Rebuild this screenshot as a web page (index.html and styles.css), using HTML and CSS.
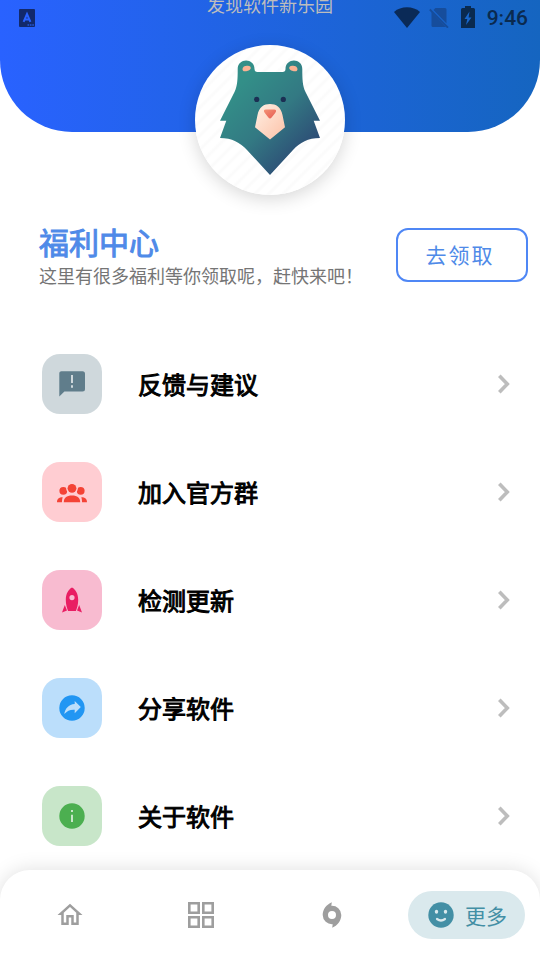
FILE: index.html
```html
<!DOCTYPE html>
<html lang="zh-CN">
<head>
<meta charset="utf-8">
<meta name="viewport" content="width=device-width, initial-scale=1">
<title>更多</title>
<link rel="stylesheet" href="styles.css">
</head>
<body>
<div class="status-bar">
  <svg class="status-app" width="16" height="18" viewBox="0 0 16 18" aria-hidden="true">
    <rect width="16" height="18" rx="1" fill="#12296b"/>
    <path d="M4.600 12.800 8 5l3.400 7.800M6 10.400h4" fill="none" stroke="#2962ff" stroke-width="2"/>
    <path d="M8.500 16h6.500" stroke="#2458d8" stroke-width="1.400" stroke-dasharray="1.600 .8"/>
  </svg>
  <div class="status-right">
    <svg width="26" height="22" viewBox="0 0 26 22" aria-hidden="true"><path d="M0 6C7-.2 19-.2 26 6L13 22Z" fill="#0a2a57"/></svg>
    <svg width="20" height="22" viewBox="0 0 20 22" aria-hidden="true">
      <path d="M6.500 2H16a1.500 1.500 0 0 1 1.500 1.500V17.500L4.500 4ZM2.500 6 17 21H4A1.500 1.500 0 0 1 2.500 19.500Z" fill="#164d9c"/>
      <path d="M.8 3.500 19 21.700" stroke="#164d9c" stroke-width="1.800"/>
    </svg>
    <svg width="14" height="22" viewBox="0 0 14 22" aria-hidden="true">
      <path d="M4 0h6v2h2.500A1.500 1.500 0 0 1 14 3.500V22H0V3.500A1.500 1.500 0 0 1 1.500 2H4Z" fill="#0a2a4f"/>
      <path d="M8.500 5.500 3.500 13h2.800L5 19l5.500-7.500H7.600Z" fill="#1866ca"/>
    </svg>
    <span class="clock">9:46</span>
  </div>
</div>

<header class="hero"><p class="tagline">发现软件新乐园</p></header>

<main class="content">
  <div class="avatar">
    <svg viewBox="0 0 150 150" role="img" aria-label="小熊">
      <defs>
        <linearGradient id="fur" gradientUnits="userSpaceOnUse" x1="42" y1="42" x2="110" y2="110">
          <stop offset="0" stop-color="#338f88"/><stop offset=".5" stop-color="#337983"/><stop offset="1" stop-color="#2d4b75"/>
        </linearGradient>
        <linearGradient id="snout" x1="0" y1="0" x2="1" y2="1">
          <stop offset="0" stop-color="#fff0e4"/><stop offset="1" stop-color="#fcc1a7"/>
        </linearGradient>
        <linearGradient id="nose" x1="0" y1="0" x2="1" y2="1">
          <stop offset="0" stop-color="#f49376"/><stop offset="1" stop-color="#e65a51"/>
        </linearGradient>
      </defs>
      <path fill="url(#fur)" d="M42.700 24C42.700 12.500 59.500 12.500 59.500 24Q59.500 27 62.500 27H87.500Q90.500 27 90.500 24C90.500 12.500 107.300 12.500 107.300 24C107.300 34 107.500 41 110.500 47L125 75.700H118.700L125 93C113 93 105 97.500 98 105L75 130 52 105C45 97.500 37 93 25 93L31.300 75.700H25L39.500 47C42.500 41 42.700 34 42.700 24Z"/>
      <path fill="#fbb293" d="M47.500 24c0-3 4-4 6.500-3 3 1 2 4-1 4.700-3 .8-5.500 1.300-5.500-1.700ZM102.500 24c0-3-4-4-6.500-3-3 1-2 4 1 4.700 3 .8 5.500 1.300 5.500-1.700Z"/>
      <circle cx="61.700" cy="54.400" r="2.600" fill="#1b2f53"/><circle cx="88.300" cy="54.400" r="2.600" fill="#1b2f53"/>
      <path fill="url(#snout)" d="M60 82.300 62.500 70C64 62 69 59 75 59S86 62 87.500 70L90 82.300 75 94.400Z"/>
      <path fill="url(#nose)" d="M71 64.500h8q3.500 0 1.200 3.500L76.600 72.500q-1.600 2-3.200 0L69.800 68Q67.500 64.500 71 64.500Z"/>
    </svg>
  </div>

  <section class="welfare">
    <div>
      <h1>福利中心</h1>
      <p>这里有很多福利等你领取呢，赶快来吧！</p>
    </div>
    <button class="claim" type="button">去领取</button>
  </section>

  <ul class="menu">
    <li><a href="#feedback">
      <span class="tile tile-grey"><svg class="icon" viewBox="0 0 30 30" aria-hidden="true"><path fill-rule="evenodd" d="M4.500 2.200h21A2.500 2.500 0 0 1 28 4.700v15.200a2.500 2.500 0 0 1-2.500 2.500H7.400L2.300 27.600V4.700A2.300 2.300 0 0 1 4.500 2.200ZM14 6v8h2V6ZM14 16.200v2.600h2v-2.600Z"/></svg></span>
      <span class="label">反馈与建议</span>
      <svg class="chevron" viewBox="0 0 12 20" aria-hidden="true"><path d="m1.300 1.800 8 8.200-8 8.200"/></svg>
    </a></li>
    <li><a href="#group">
      <span class="tile tile-red"><svg class="icon" viewBox="0 0 30 30" aria-hidden="true"><clipPath id="left-head"><path d="M0 8H9.300Q8.600 13.500 11 15.500V19H0Z"/></clipPath><clipPath id="right-head"><path d="M30 8H20.700Q21.400 13.500 19 15.500V19H30Z"/></clipPath><circle cx="15" cy="11.300" r="4.400"/><circle cx="6.300" cy="13.800" r="3.900" clip-path="url(#left-head)"/><circle cx="23.700" cy="13.800" r="3.900" clip-path="url(#right-head)"/><path d="M6.800 25.300C6.800 20.800 9.500 18.500 15 18.500S23.200 20.800 23.200 25.300ZM0 25.300C0 22 1.800 20.400 5.700 20.300Q4.900 22.200 4.900 25.300ZM30 25.300C30 22 28.200 20.400 24.300 20.300Q25.100 22.200 25.100 25.300Z"/></svg></span>
      <span class="label">加入官方群</span>
      <svg class="chevron" viewBox="0 0 12 20" aria-hidden="true"><path d="m1.300 1.800 8 8.200-8 8.200"/></svg>
    </a></li>
    <li><a href="#update">
      <span class="tile tile-pink"><svg class="icon" viewBox="0 0 30 30" aria-hidden="true"><path fill-rule="evenodd" d="M15 2.600C18.700 4.500 21.200 9 21.200 15 21.200 19.500 20 23.500 18.900 26H11.100C10 23.500 8.800 19.500 8.800 15 8.800 9 11.300 4.500 15 2.600ZM15 10a2.600 2.600 0 1 0 0 5.200 2.600 2.600 0 0 0 0-5.200ZM7.800 20 10 25.500 5 27.400ZM22.200 20 20 25.500 25 27.400Z"/></svg></span>
      <span class="label">检测更新</span>
      <svg class="chevron" viewBox="0 0 12 20" aria-hidden="true"><path d="m1.300 1.800 8 8.200-8 8.200"/></svg>
    </a></li>
    <li><a href="#share">
      <span class="tile tile-blue"><svg class="icon" viewBox="0 0 30 30" aria-hidden="true"><path fill-rule="evenodd" d="M15 2.300a12.700 12.700 0 1 0 0 25.400 12.700 12.700 0 0 0 0-25.400ZM17.700 8 23.800 14.100 17.700 20.300V16.700C13 16.400 10.300 17.800 7.300 21 8.200 15.500 11.500 11.500 17.700 11Z"/></svg></span>
      <span class="label">分享软件</span>
      <svg class="chevron" viewBox="0 0 12 20" aria-hidden="true"><path d="m1.300 1.800 8 8.200-8 8.200"/></svg>
    </a></li>
    <li><a href="#about">
      <span class="tile tile-green"><svg class="icon" viewBox="0 0 30 30" aria-hidden="true"><path fill-rule="evenodd" d="M15 2.300a12.700 12.700 0 1 0 0 25.400 12.700 12.700 0 0 0 0-25.400ZM14 9v2h2V9ZM14 13.700V21h2v-7.300Z"/></svg></span>
      <span class="label">关于软件</span>
      <svg class="chevron" viewBox="0 0 12 20" aria-hidden="true"><path d="m1.300 1.800 8 8.200-8 8.200"/></svg>
    </a></li>
  </ul>
</main>

<nav class="tabs">
  <a href="#home" aria-label="首页"><svg class="icon" viewBox="0 0 24 24" aria-hidden="true"><path d="M12 5.690l5 4.500V18h-2v-6H9v6H7v-7.810l5-4.500M12 3 2 12h3v8h6v-6h2v6h6v-8h3Z"/></svg></a>
  <a href="#categories" aria-label="分类"><svg class="icon icon-grid" viewBox="0 0 30 30" aria-hidden="true"><path d="M3.300 3.300h9.400v9.400H3.300ZM17.300 3.300h9.400v9.400h-9.400ZM3.300 17.300h9.400v9.400H3.300ZM17.300 17.300h9.400v9.400h-9.400Z"/></svg></a>
  <a href="#discover" aria-label="发现"><svg class="icon" viewBox="0 0 30 30" aria-hidden="true"><path fill-rule="evenodd" d="M14.800 2.200C9.500 4.500 5.700 9.300 5.700 15A9.300 9.300 0 0 0 15.700 24.200L15.200 27.800C20.500 25.500 24.300 20.700 24.300 15A9.300 9.300 0 0 0 14.300 5.800ZM15 11a4 4 0 1 1 0 8 4 4 0 0 1 0-8Z"/></svg></a>
  <a class="active" href="#more" aria-current="page"><svg class="icon" viewBox="0 0 30 30" aria-hidden="true"><circle cx="15" cy="15" r="12.700"/><g fill="#dae9ed"><ellipse cx="10.500" cy="11.800" rx="1.700" ry="2"/><ellipse cx="19.500" cy="11.800" rx="1.700" ry="2"/></g><path d="M11 19Q15 22 19 19" fill="none" stroke="#dae9ed" stroke-width="2.200" stroke-linecap="round"/></svg><span>更多</span></a>
</nav>
</body>
</html>
```
FILE: styles.css
```css
* {
  box-sizing: border-box;
}

body {
  margin: 0;
  min-height: 100vh;
  display: flex;
  flex-direction: column;
  background: #fff;
  font-family: "Noto Sans CJK SC", sans-serif;
  overflow-x: hidden;
}

h1,
p,
ul {
  margin: 0;
  padding: 0;
}

a {
  color: inherit;
  text-decoration: none;
}

svg {
  display: block;
}

/* System bar lies over the hero */
.status-bar {
  position: absolute;
  top: 0;
  left: 0;
  right: 0;
  height: 36px;
  padding: 0 12px 0 19px;
  display: flex;
  align-items: center;
  justify-content: space-between;
}

.status-right {
  display: flex;
  align-items: center;
  gap: 12px;
}

.status-right svg {
  margin-top: -2px;
}

.status-right svg:first-child {
  margin-right: -3px;
}

.clock {
  color: #0a2a4f;
  font-family: Roboto, sans-serif;
  font-size: 21px;
  font-weight: 500;
  line-height: 24px;
}

.hero {
  height: 132px;
  border-radius: 0 0 72px 72px;
  background: linear-gradient(90deg, #2962ff, #1565c0);
  overflow: hidden;
}

/* The tagline is scrolled partly under the top edge */
.tagline {
  margin-top: -8px;
  color: #bdbdbd;
  font-size: 18px;
  line-height: 24px;
  text-align: center;
}

.content {
  flex: 1;
}

.avatar {
  width: 150px;
  height: 150px;
  margin: -87px auto 0;
  border-radius: 50%;
  overflow: hidden;
  background: repeating-linear-gradient(135deg, #fff 0 5px, #fbfbfb 7px 8px, #fff 10px);
  box-shadow: 0 4px 18px rgba(0, 0, 0, 0.16);
}

.welfare {
  display: flex;
  align-items: center;
  justify-content: space-between;
  margin: 28px 12px 43px 39px;
}

/* A 1px outline thickens the regular weight of the headings */
.welfare h1,
.label {
  font-weight: 400;
  -webkit-text-stroke: 1px currentColor;
}

.welfare h1 {
  margin-bottom: 4px;
  color: #4f8ae8;
  font-size: 30px;
  line-height: 36px;
}

.welfare p {
  color: #757575;
  font-size: 18px;
  line-height: 24px;
  white-space: nowrap;
}

.claim {
  width: 132px;
  height: 54px;
  padding: 0 4px 2px 0;
  flex: none;
  border: 2px solid #4f87f5;
  border-radius: 12px;
  background: #fff;
  color: #4f8ae8;
  font-family: inherit;
  font-size: 21px;
  letter-spacing: 2px;
}

.menu {
  list-style: none;
}

.menu a {
  display: flex;
  align-items: center;
  padding: 24px 30px 24px 42px;
}

.tile {
  width: 60px;
  height: 60px;
  border-radius: 18px;
  display: grid;
  place-items: center;
}

.icon {
  width: 30px;
  height: 30px;
  fill: currentColor;
}

.tile-grey { background: #cfd8dc; color: #607d8b; }
.tile-red { background: #ffcdd2; color: #f44336; }
.tile-pink { background: #f8bbd0; color: #e91e63; }
.tile-blue { background: #bbdefb; color: #2196f3; }
.tile-green { background: #c8e6c9; color: #4caf50; }

.label {
  flex: 1;
  margin-left: 36px;
  color: #000;
  font-size: 24px;
  line-height: 36px;
}

.chevron {
  width: 12px;
  height: 20px;
  fill: none;
  stroke: #bdbdbd;
  stroke-width: 3.6;
}

.tabs {
  display: flex;
  align-items: center;
  justify-content: space-between;
  height: 90px;
  padding: 0 15px;
  border-radius: 30px 30px 0 0;
  background: #fff;
  box-shadow: 0 0 20px rgba(0, 0, 0, 0.13);
  color: #9e9e9e;
}

.tabs a {
  min-width: 110px;
  height: 48px;
  padding: 0 18px;
  display: flex;
  align-items: center;
  justify-content: center;
  gap: 9px;
  border-radius: 24px;
}

.tabs .active {
  background: #dae9ed;
  color: #438fa5;
  font-size: 21px;
}

.tabs .icon-grid {
  fill: none;
  stroke: currentColor;
  stroke-width: 2.6;
}
```
